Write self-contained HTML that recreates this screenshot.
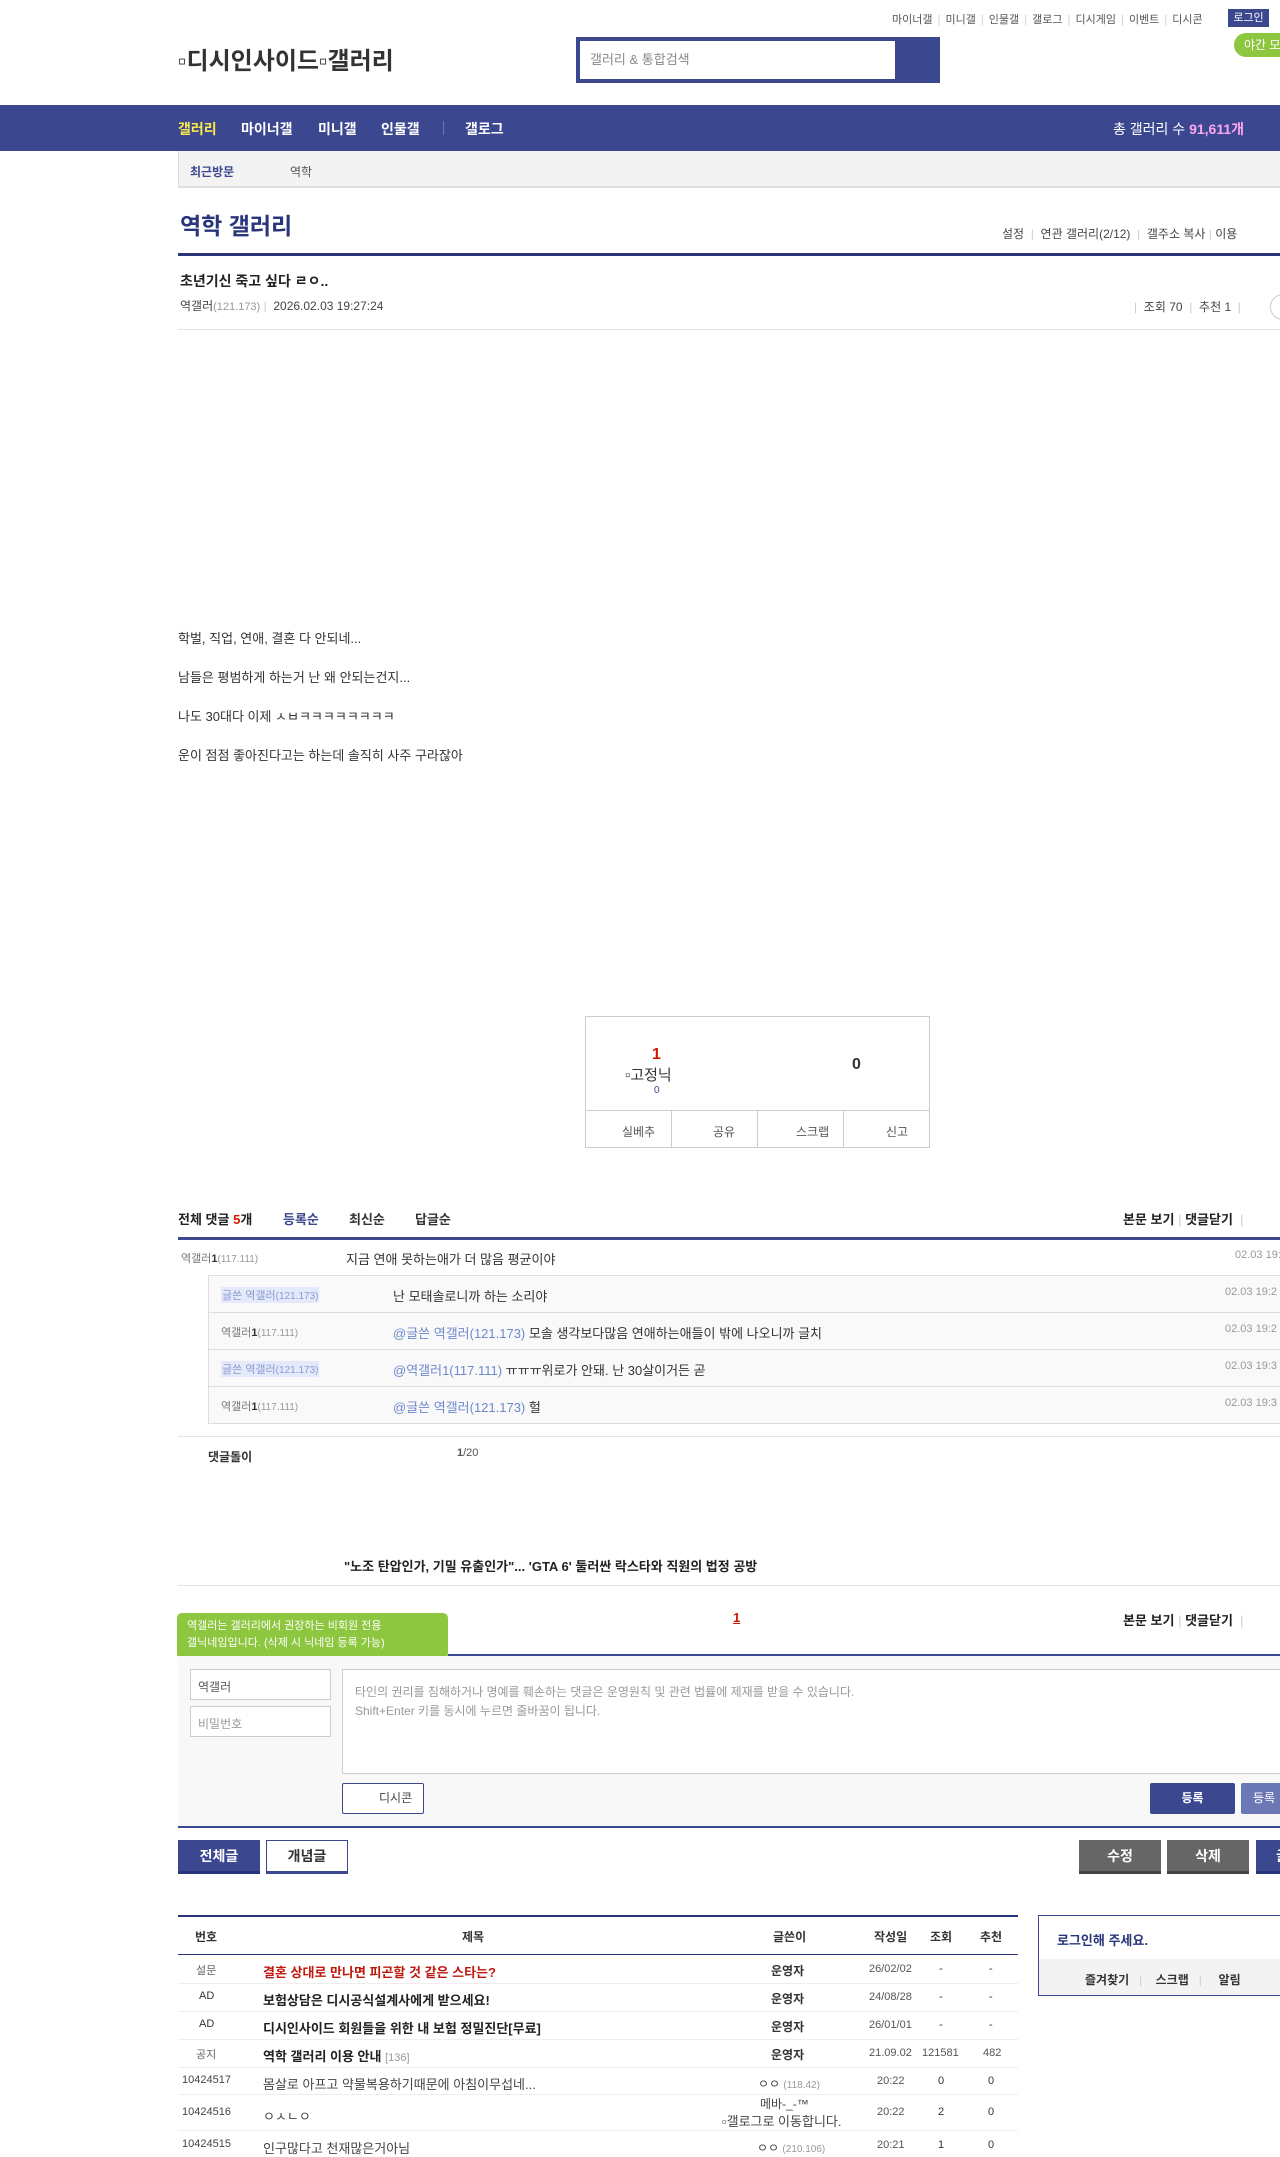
<!DOCTYPE html>
<html><head><meta charset="utf-8">
<style>
*{margin:0;padding:0;box-sizing:border-box}
html,body{width:1280px;height:2157px;overflow:hidden;background:#fff}
body{font-family:"Liberation Sans","Noto Sans CJK KR",sans-serif;font-size:12px;color:#333;position:relative}
.a{position:absolute;white-space:nowrap}
.navy{background:#3b4890}
.g{color:#999}
.b{font-weight:bold}
</style></head><body>

<!-- top links -->
<div class="a" style="left:892px;top:11px;font-size:11px;color:#555;word-spacing:2px">마이너갤 <span style="color:#ccc">|</span> 미니갤 <span style="color:#ccc">|</span> 인물갤 <span style="color:#ccc">|</span> 갤로그 <span style="color:#ccc">|</span> 디시게임 <span style="color:#ccc">|</span> 이벤트 <span style="color:#ccc">|</span> 디시콘</div>
<div class="a navy" style="left:1228px;top:9px;width:41px;height:18px;color:#fff;font-size:11px;text-align:center;line-height:18px">로그인</div>
<div class="a" style="left:1234px;top:33px;width:60px;height:24px;background:#8dc63f;border-radius:12px 0 0 12px;color:#fff;font-size:12px;line-height:24px;padding-left:10px">야간 모</div>

<!-- logo -->
<div class="a b" style="left:178px;top:41px;font-size:24px;color:#333">▫디시인사이드▫갤러리</div>
<!-- search -->
<div class="a navy" style="left:576px;top:37px;width:364px;height:46px"></div>
<div class="a" style="left:580px;top:41px;width:315px;height:38px;background:#fff;color:#888;font-size:13px;line-height:38px;padding-left:10px">갤러리 &amp; 통합검색</div>

<!-- nav -->
<div class="a navy" style="left:0;top:105px;width:1280px;height:46px"></div>
<div class="a b" style="left:178px;top:119px;font-size:14px;color:#fff"><span style="color:#f7e948">갤러리</span></div>
<div class="a b" style="left:241px;top:119px;font-size:14px;color:#fff">마이너갤</div>
<div class="a b" style="left:318px;top:119px;font-size:14px;color:#fff">미니갤</div>
<div class="a b" style="left:381px;top:119px;font-size:14px;color:#fff">인물갤</div>
<div class="a" style="left:443px;top:121px;width:1px;height:14px;background:#6a76b5"></div>
<div class="a b" style="left:465px;top:119px;font-size:14px;color:#fff">갤로그</div>
<div class="a" style="left:1113px;top:119px;font-size:14px;color:#fff">총 갤러리 수 <b style="color:#ffa6f0">91,611개</b></div>

<!-- sub bar -->
<div class="a" style="left:178px;top:151px;width:1102px;height:37px;background:#f3f3f3;border-left:1px solid #ddd;border-bottom:2px solid #ddd"></div>
<div class="a b" style="left:190px;top:163px;font-size:12px;color:#3b4890">최근방문</div>
<div class="a" style="left:290px;top:163px;font-size:12px;color:#555">역학</div>

<!-- title -->
<div class="a b" style="left:180px;top:207px;font-size:23px;color:#29367c">역학 갤러리</div>
<div class="a" style="left:1002px;top:225px;font-size:12px;color:#444">설정 &nbsp;<span style="color:#ccc">|</span>&nbsp; 연관 갤러리(2/12) &nbsp;<span style="color:#ccc">|</span>&nbsp; 갤주소 복사 <span style="color:#ccc">|</span> 이용</div>
<div class="a" style="left:178px;top:253px;width:1102px;height:3px;background:#29367c"></div>

<div class="a b" style="left:180px;top:271px;font-size:14px;color:#222">초년기신 죽고 싶다 ㄹㅇ..</div>
<div class="a" style="left:180px;top:297px;font-size:12px;color:#444">역갤러<span class="g" style="font-size:11px">(121.173)</span> <span style="color:#ccc">|</span>&nbsp; 2026.02.03 19:27:24</div>
<div class="a" style="left:1134px;top:298px;font-size:12px;color:#444"><span style="color:#ccc">|</span>&nbsp; 조회 70 &nbsp;<span style="color:#ccc">|</span>&nbsp; 추천 1 &nbsp;<span style="color:#ccc">|</span></div>
<div class="a" style="left:1270px;top:294px;width:26px;height:26px;border:1px solid #ccc;border-radius:50%"></div>
<div class="a" style="left:178px;top:329px;width:1102px;height:1px;background:#e5e5e5"></div>

<!-- body -->
<div class="a" style="left:178px;top:619px;font-size:13px;color:#333;line-height:39px;white-space:normal">학벌, 직업, 연애, 결혼 다 안되네...<br>남들은 평범하게 하는거 난 왜 안되는건지...<br>나도 30대다 이제 ㅅㅂㅋㅋㅋㅋㅋㅋㅋㅋ<br>운이 점점 좋아진다고는 하는데 솔직히 사주 구라잖아</div>

<!-- recommend box -->
<div class="a" style="left:585px;top:1016px;width:345px;height:132px;border:1px solid #ccc"></div>
<div class="a" style="left:585px;top:1110px;width:345px;height:1px;background:#ccc"></div>
<div class="a" style="left:671px;top:1111px;width:1px;height:37px;background:#ccc"></div>
<div class="a" style="left:757px;top:1111px;width:1px;height:37px;background:#ccc"></div>
<div class="a" style="left:843px;top:1111px;width:1px;height:37px;background:#ccc"></div>
<div class="a b" style="left:652px;top:1046px;font-size:16px;color:#d31900">1</div>
<div class="a" style="left:625px;top:1064px;font-size:15px;color:#333">▫고정닉</div>
<div class="a" style="left:654px;top:1085px;font-size:10px;color:#3b4890">0</div>
<div class="a b" style="left:852px;top:1056px;font-size:16px;color:#333">0</div>
<div class="a" style="left:622px;top:1123px;font-size:12px;color:#555">실베추</div>
<div class="a" style="left:713px;top:1123px;font-size:12px;color:#555">공유</div>
<div class="a" style="left:796px;top:1123px;font-size:12px;color:#555">스크랩</div>
<div class="a" style="left:886px;top:1123px;font-size:12px;color:#555">신고</div>

<!-- comments header -->
<div class="a b" style="left:178px;top:1209px;font-size:13px;color:#222">전체 댓글 <span style="color:#d31900">5</span>개</div>
<div class="a b" style="left:283px;top:1209px;font-size:13px;color:#3b4890">등록순</div>
<div class="a b" style="left:349px;top:1209px;font-size:13px;color:#333">최신순</div>
<div class="a b" style="left:415px;top:1209px;font-size:13px;color:#333">답글순</div>
<div class="a b" style="left:1123px;top:1209px;font-size:13px;color:#222">본문 보기 <span style="color:#ccc;font-weight:normal">|</span> 댓글닫기 &nbsp;<span style="color:#ccc;font-weight:normal">|</span></div>
<div class="a" style="left:178px;top:1237px;width:1102px;height:3px;background:#3b4890"></div>

<div class="a" style="left:181px;top:1250px;font-size:11px;color:#777">역갤러<b style="color:#333">1</b><span class="g" style="font-size:10px">(117.111)</span></div>
<div class="a" style="left:346px;top:1249px;font-size:13px;color:#333">지금 연애 못하는애가 더 많음 평균이야</div>
<div class="a g" style="left:1235px;top:1249px;font-size:11px">02.03 19:</div>

<div class="a" style="left:208px;top:1275px;width:1072px;height:149px;background:#f9f9f9;border:1px solid #ddd;border-right:none"></div>
<div class="a" style="left:209px;top:1312px;width:1071px;height:1px;background:#ddd"></div>
<div class="a" style="left:209px;top:1349px;width:1071px;height:1px;background:#ddd"></div>
<div class="a" style="left:209px;top:1386px;width:1071px;height:1px;background:#ddd"></div>

<div class="a" style="left:221px;top:1287px;font-size:11px;color:#8a9bd4;background:#e4eaf9;padding:0 1px">글쓴 역갤러<span style="font-size:10px">(121.173)</span></div>
<div class="a" style="left:393px;top:1286px;font-size:13px;color:#333">난 모태솔로니까 하는 소리야</div>
<div class="a g" style="left:1225px;top:1286px;font-size:11px">02.03 19:2</div>

<div class="a" style="left:221px;top:1324px;font-size:11px;color:#777">역갤러<b style="color:#333">1</b><span class="g" style="font-size:10px">(117.111)</span></div>
<div class="a" style="left:393px;top:1323px;font-size:13px;color:#333"><span style="color:#6d88cc">@글쓴 역갤러(121.173)</span> 모솔 생각보다많음 연애하는애들이 밖에 나오니까 글치</div>
<div class="a g" style="left:1225px;top:1323px;font-size:11px">02.03 19:2</div>

<div class="a" style="left:221px;top:1361px;font-size:11px;color:#8a9bd4;background:#e4eaf9;padding:0 1px">글쓴 역갤러<span style="font-size:10px">(121.173)</span></div>
<div class="a" style="left:393px;top:1360px;font-size:13px;color:#333"><span style="color:#6d88cc">@역갤러1(117.111)</span> ㅠㅠㅠ위로가 안돼. 난 30살이거든 곧</div>
<div class="a g" style="left:1225px;top:1360px;font-size:11px">02.03 19:3</div>

<div class="a" style="left:221px;top:1398px;font-size:11px;color:#777">역갤러<b style="color:#333">1</b><span class="g" style="font-size:10px">(117.111)</span></div>
<div class="a" style="left:393px;top:1397px;font-size:13px;color:#333"><span style="color:#6d88cc">@글쓴 역갤러(121.173)</span> 헐</div>
<div class="a g" style="left:1225px;top:1397px;font-size:11px">02.03 19:3</div>

<div class="a" style="left:178px;top:1436px;width:1102px;height:1px;background:#e5e5e5"></div>
<div class="a b" style="left:208px;top:1448px;font-size:12px;color:#333">댓글돌이</div>
<div class="a" style="left:457px;top:1447px;font-size:11px;color:#555"><b>1</b>/20</div>

<div class="a b" style="left:344px;top:1556px;font-size:13px;color:#222">"노조 탄압인가, 기밀 유출인가"... 'GTA 6' 둘러싼 락스타와 직원의 법정 공방</div>
<div class="a" style="left:178px;top:1585px;width:1102px;height:1px;background:#e5e5e5"></div>

<!-- write form -->
<div class="a" style="left:177px;top:1613px;width:271px;height:46px;background:#8dc63f;border-radius:5px;color:#fff;font-size:11px;line-height:17px;padding:5px 10px;white-space:normal">역갤러는 갤러리에서 권장하는 비회원 전용<br>갤닉네임입니다. (삭제 시 닉네임 등록 가능)</div>
<div class="a" style="left:210px;top:1659px;width:0;height:0;border-left:6px solid transparent;border-right:6px solid transparent;border-top:8px solid #8dc63f"></div>
<div class="a b" style="left:733px;top:1610px;font-size:13px;color:#d31900;text-decoration:underline">1</div>
<div class="a b" style="left:1123px;top:1610px;font-size:13px;color:#222">본문 보기 <span style="color:#ccc;font-weight:normal">|</span> 댓글닫기 &nbsp;<span style="color:#ccc;font-weight:normal">|</span></div>
<div class="a" style="left:448px;top:1654px;width:832px;height:2px;background:#3b4890"></div>
<div class="a" style="left:178px;top:1656px;width:1102px;height:171px;background:#f8f8f8"></div>
<div class="a" style="left:190px;top:1669px;width:141px;height:31px;background:#fff;border:1px solid #ccc;font-size:12px;color:#555;padding:8px 7px">역갤러</div>
<div class="a" style="left:190px;top:1706px;width:141px;height:31px;background:#fff;border:1px solid #ccc;font-size:12px;color:#999;padding:8px 7px">비밀번호</div>
<div class="a" style="left:342px;top:1669px;width:950px;height:105px;background:#fff;border:1px solid #ccc;font-size:12px;color:#999;padding:13px 12px;line-height:19px;white-space:normal">타인의 권리를 침해하거나 명예를 훼손하는 댓글은 운영원칙 및 관련 법률에 제재를 받을 수 있습니다.<br>Shift+Enter 키를 동시에 누르면 줄바꿈이 됩니다.</div>
<div class="a" style="left:342px;top:1783px;width:82px;height:31px;background:#fff;border:1px solid #3b4890;border-radius:2px;font-size:12px;color:#444;line-height:29px;padding-left:36px">디시콘</div>
<div class="a navy" style="left:1150px;top:1783px;width:85px;height:31px;border-radius:2px;color:#fff;font-size:12px;font-weight:bold;line-height:31px;text-align:center">등록</div>
<div class="a" style="left:1241px;top:1783px;width:60px;height:31px;border-radius:2px;background:#6b78b5;color:#fff;font-size:12px;line-height:31px;padding-left:12px">등록</div>
<div class="a" style="left:178px;top:1826px;width:1102px;height:2px;background:#3b4890"></div>

<!-- buttons -->
<div class="a navy" style="left:178px;top:1840px;width:82px;height:34px;border-bottom:3px solid #29367c;color:#fff;font-size:14px;font-weight:bold;line-height:32px;text-align:center">전체글</div>
<div class="a" style="left:266px;top:1840px;width:82px;height:34px;border:1px solid #3b4890;border-bottom:3px solid #3b4890;color:#333;font-size:14px;font-weight:bold;line-height:30px;text-align:center">개념글</div>
<div class="a" style="left:1079px;top:1840px;width:82px;height:34px;background:#666;border-bottom:3px solid #444;color:#fff;font-size:14px;font-weight:bold;line-height:32px;text-align:center">수정</div>
<div class="a" style="left:1167px;top:1840px;width:82px;height:34px;background:#666;border-bottom:3px solid #444;color:#fff;font-size:14px;font-weight:bold;line-height:32px;text-align:center">삭제</div>
<div class="a navy" style="left:1256px;top:1840px;width:40px;height:34px;border-bottom:3px solid #29367c;color:#fff;font-size:14px;font-weight:bold;line-height:32px;padding-left:20px">글</div>

<!-- list -->
<div class="a" style="left:178px;top:1915px;width:840px;height:2px;background:#29367c"></div>
<div class="a b" style="left:195px;top:1928px;font-size:12px;color:#333">번호</div>
<div class="a b" style="left:462px;top:1928px;font-size:12px;color:#333">제목</div>
<div class="a b" style="left:773px;top:1928px;font-size:12px;color:#333">글쓴이</div>
<div class="a b" style="left:874px;top:1928px;font-size:12px;color:#333">작성일</div>
<div class="a b" style="left:930px;top:1928px;font-size:12px;color:#333">조회</div>
<div class="a b" style="left:980px;top:1928px;font-size:12px;color:#333">추천</div>
<div class="a" style="left:178px;top:1954px;width:840px;height:1px;background:#29367c"></div>

<div class="a" style="left:178px;top:1983px;width:840px;height:1px;background:#eee"></div>
<div class="a" style="left:178px;top:2011px;width:840px;height:1px;background:#eee"></div>
<div class="a" style="left:178px;top:2039px;width:840px;height:1px;background:#eee"></div>
<div class="a" style="left:178px;top:2067px;width:840px;height:1px;background:#eee"></div>
<div class="a" style="left:178px;top:2094px;width:840px;height:1px;background:#eee"></div>
<div class="a" style="left:178px;top:2130px;width:840px;height:1px;background:#eee"></div>

<div class="a" style="left:196px;top:1962px;font-size:11px;color:#666">설문</div>
<div class="a b" style="left:263px;top:1962px;font-size:13px;color:#c0180c">결혼 상대로 만나면 피곤할 것 같은 스타는?</div>
<div class="a b" style="left:771px;top:1962px;font-size:12px;color:#333">운영자</div>
<div class="a" style="left:869px;top:1963px;font-size:11px;color:#555">26/02/02</div>
<div class="a" style="left:939px;top:1963px;font-size:11px">-</div><div class="a" style="left:989px;top:1963px;font-size:11px">-</div>

<div class="a" style="left:199px;top:1990px;font-size:11px;color:#333">AD</div>
<div class="a b" style="left:263px;top:1990px;font-size:13px;color:#222">보험상담은 디시공식설계사에게 받으세요!</div>
<div class="a b" style="left:771px;top:1990px;font-size:12px;color:#333">운영자</div>
<div class="a" style="left:869px;top:1991px;font-size:11px;color:#555">24/08/28</div>
<div class="a" style="left:939px;top:1991px;font-size:11px">-</div><div class="a" style="left:989px;top:1991px;font-size:11px">-</div>

<div class="a" style="left:199px;top:2018px;font-size:11px;color:#333">AD</div>
<div class="a b" style="left:263px;top:2018px;font-size:13px;color:#222">디시인사이드 회원들을 위한 내 보험 정밀진단[무료]</div>
<div class="a b" style="left:771px;top:2018px;font-size:12px;color:#333">운영자</div>
<div class="a" style="left:869px;top:2019px;font-size:11px;color:#555">26/01/01</div>
<div class="a" style="left:939px;top:2019px;font-size:11px">-</div><div class="a" style="left:989px;top:2019px;font-size:11px">-</div>

<div class="a" style="left:196px;top:2046px;font-size:11px;color:#666">공지</div>
<div class="a b" style="left:263px;top:2046px;font-size:13px;color:#222">역학 갤러리 이용 안내 <span style="font-weight:normal;color:#999;font-size:11px">[136]</span></div>
<div class="a b" style="left:771px;top:2046px;font-size:12px;color:#333">운영자</div>
<div class="a" style="left:869px;top:2047px;font-size:11px;color:#555">21.09.02</div>
<div class="a" style="left:922px;top:2047px;font-size:11px;color:#555">121581</div>
<div class="a" style="left:983px;top:2047px;font-size:11px;color:#555">482</div>

<div class="a" style="left:182px;top:2074px;font-size:11px;color:#444">10424517</div>
<div class="a" style="left:263px;top:2074px;font-size:13px;color:#444">몸살로 아프고 약물복용하기때문에 아침이무섭네...</div>
<div class="a" style="left:758px;top:2075px;font-size:12px;color:#444">ㅇㅇ <span class="g" style="font-size:10px">(118.42)</span></div>
<div class="a" style="left:877px;top:2075px;font-size:11px;color:#555">20:22</div>
<div class="a" style="left:938px;top:2075px;font-size:11px">0</div><div class="a" style="left:988px;top:2075px;font-size:11px">0</div>

<div class="a" style="left:182px;top:2106px;font-size:11px;color:#444">10424516</div>
<div class="a" style="left:263px;top:2106px;font-size:13px;color:#444">ㅇㅅㄴㅇ</div>
<div class="a" style="left:760px;top:2095px;font-size:12px;color:#444">메바-_-™</div>
<div class="a" style="left:722px;top:2111px;font-size:13px;color:#444">▫갤로그로 이동합니다.</div>
<div class="a" style="left:877px;top:2106px;font-size:11px;color:#555">20:22</div>
<div class="a" style="left:938px;top:2106px;font-size:11px">2</div><div class="a" style="left:988px;top:2106px;font-size:11px">0</div>

<div class="a" style="left:182px;top:2138px;font-size:11px;color:#444">10424515</div>
<div class="a" style="left:263px;top:2138px;font-size:13px;color:#444">인구많다고 천재많은거아님</div>
<div class="a" style="left:757px;top:2139px;font-size:12px;color:#444">ㅇㅇ <span class="g" style="font-size:10px">(210.106)</span></div>
<div class="a" style="left:877px;top:2139px;font-size:11px;color:#555">20:21</div>
<div class="a" style="left:938px;top:2139px;font-size:11px">1</div><div class="a" style="left:988px;top:2139px;font-size:11px">0</div>

<!-- login box -->
<div class="a" style="left:1038px;top:1915px;width:260px;height:81px;border:1px solid #3b4890;border-right:none"></div>
<div class="a" style="left:1039px;top:1959px;width:241px;height:36px;background:#f3f3f3"></div>
<div class="a b" style="left:1057px;top:1930px;font-size:13px;color:#29367c">로그인해 주세요.</div>
<div class="a b" style="left:1085px;top:1971px;font-size:12px;color:#333">즐겨찾기 &nbsp;&nbsp;<span style="color:#ccc;font-weight:normal">|</span>&nbsp;&nbsp;&nbsp; 스크랩 &nbsp;&nbsp;<span style="color:#ccc;font-weight:normal">|</span>&nbsp;&nbsp;&nbsp;&nbsp; 알림</div>

</body></html>
